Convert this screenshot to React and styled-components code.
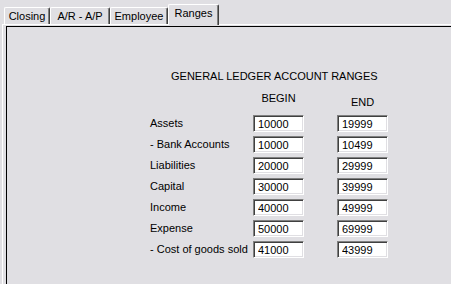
import React from 'react';
import styled, { createGlobalStyle } from 'styled-components';

const GlobalStyle = createGlobalStyle`
  html, body {
    margin: 0;
    padding: 0;
    background: #e0dfe3;
    overflow: hidden;
  }
  body {
    font-family: "Liberation Sans", Arial, sans-serif;
    font-size: 11px;
    color: #000;
  }
`;

const Window = styled.div`
  width: 451px;
  height: 284px;
  display: flex;
  flex-direction: column;
  background: #e0dfe3;
`;

const TabStrip = styled.div`
  display: flex;
  align-items: flex-end;
  height: 24px;
  margin-left: 2px;
  padding-left: 2px;
  border-bottom: 1px solid #fff;
`;

const Tab = styled.div`
  box-sizing: border-box;
  width: ${(p) => p.$width}px;
  height: ${(p) => (p.$active ? 21 : 17)}px;
  margin-bottom: ${(p) => (p.$active ? -1 : 0)}px;
  position: ${(p) => (p.$active ? 'relative' : 'static')};
  display: flex;
  align-items: flex-start;
  justify-content: center;
  padding-top: 2px;
  background: #e0dfe3;
  border-top: 1px solid #fff;
  border-left: 1px solid #fff;
  border-right: 1px solid #404040;
  border-radius: 2px 2px 0 0;
  box-shadow: inset -1px 0 0 #808080;
  line-height: 13px;
  white-space: nowrap;
  cursor: default;
`;

const Page = styled.div`
  flex: 1;
  display: flex;
  margin-left: 2px;
  padding: 1px 0 0 3px;
  border-left: 1px solid #fff;
`;

const Frame = styled.div`
  flex: 1;
  border-top: 1px solid #000;
  border-left: 1px solid #000;
  padding: 43px 0 0 143px;
`;

const RangeGrid = styled.div`
  display: grid;
  grid-template-columns: 103px 84px 51px;
  row-gap: 4px;
  align-items: center;
`;

const Title = styled.div`
  grid-column: 1 / -1;
  padding-left: 21px;
  line-height: 13px;
  margin-bottom: 5px;
  white-space: nowrap;
`;

const ColumnHead = styled.div`
  width: 51px;
  text-align: center;
  line-height: 13px;
  padding-top: ${(p) => p.$drop || 0}px;
  margin-bottom: ${(p) => 6 - (p.$drop || 0)}px;
`;

const Label = styled.div`
  line-height: 13px;
  padding-bottom: 1px;
  white-space: nowrap;
`;

const Field = styled.input`
  box-sizing: border-box;
  width: 51px;
  height: 17px;
  margin: 0;
  padding: 1px 0 0 4px;
  font: inherit;
  color: #000;
  background: #fff;
  border: 1px solid;
  border-color: #808080 #fff #fff #808080;
  box-shadow: inset 1px 1px 0 #404040, inset -1px -1px 0 #e0dfe3;
  outline: none;
`;

const tabs = [
  { name: 'Closing', width: 46 },
  { name: 'A/R - A/P', width: 60 },
  { name: 'Employee', width: 58 },
  { name: 'Ranges', width: 51, active: true },
];

const ranges = [
  { label: 'Assets', begin: '10000', end: '19999' },
  { label: '- Bank Accounts', begin: '10000', end: '10499' },
  { label: 'Liabilities', begin: '20000', end: '29999' },
  { label: 'Capital', begin: '30000', end: '39999' },
  { label: 'Income', begin: '40000', end: '49999' },
  { label: 'Expense', begin: '50000', end: '69999' },
  { label: '- Cost of goods sold', begin: '41000', end: '43999' },
];

export default function App() {
  return (
    <Window>
      <GlobalStyle />
      <TabStrip>
        {tabs.map((t) => (
          <Tab key={t.name} $width={t.width} $active={t.active}>
            {t.name}
          </Tab>
        ))}
      </TabStrip>
      <Page>
        <Frame>
          <RangeGrid>
            <Title>GENERAL LEDGER ACCOUNT RANGES</Title>
            <span />
            <ColumnHead>BEGIN</ColumnHead>
            <ColumnHead $drop={4}>END</ColumnHead>
            {ranges.map((r) => (
              <React.Fragment key={r.label}>
                <Label>{r.label}</Label>
                <Field defaultValue={r.begin} />
                <Field defaultValue={r.end} />
              </React.Fragment>
            ))}
          </RangeGrid>
        </Frame>
      </Page>
    </Window>
  );
}
